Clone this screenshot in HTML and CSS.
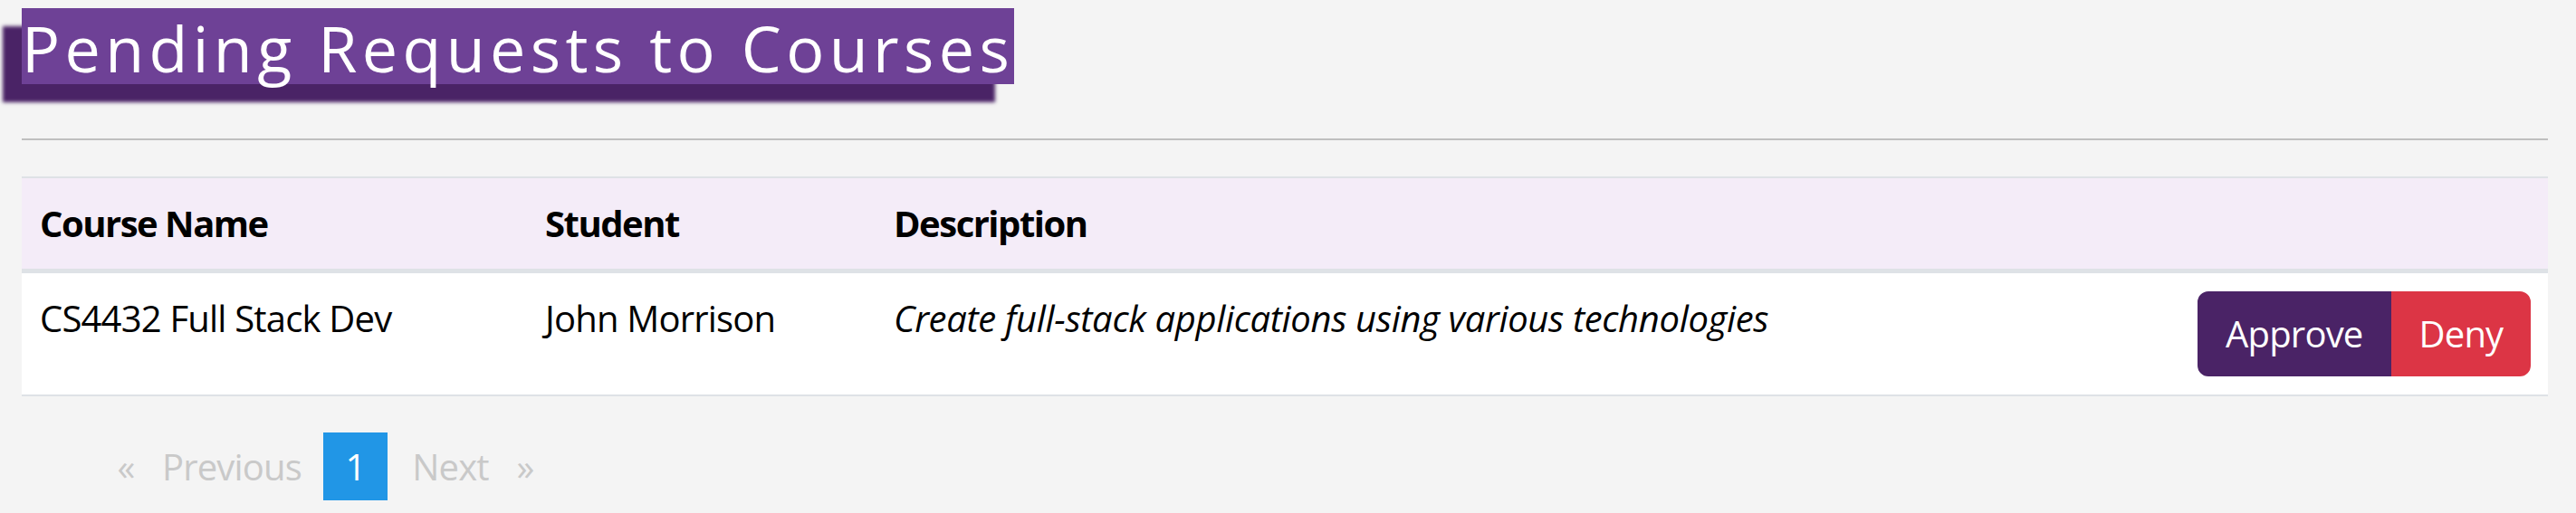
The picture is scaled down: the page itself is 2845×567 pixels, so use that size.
FILE: index.html
```html
<!DOCTYPE html>
<html lang="en">
<head>
<meta charset="utf-8">
<title>Pending Requests to Courses</title>
<link rel="stylesheet" href="styles.css">
</head>
<body>
<div class="page">
  <h1 class="title">Pending Requests to Courses</h1>
  <hr class="divider">
  <table class="requests">
    <colgroup>
      <col class="col-course">
      <col class="col-student">
      <col class="col-desc">
      <col class="col-actions">
    </colgroup>
    <thead>
      <tr>
        <th>Course Name</th>
        <th>Student</th>
        <th>Description</th>
        <th></th>
      </tr>
    </thead>
    <tbody>
      <tr>
        <td>CS4432 Full Stack Dev</td>
        <td>John Morrison</td>
        <td class="desc">Create full-stack applications using various technologies</td>
        <td class="actions">
          <div class="btn-group">
            <button class="btn btn-approve" type="button">Approve</button>
            <button class="btn btn-deny" type="button">Deny</button>
          </div>
        </td>
      </tr>
    </tbody>
  </table>
  <nav class="pager">
    <span class="pager-item pager-first">&laquo;</span>
    <span class="pager-item pager-prev">Previous</span>
    <span class="pager-item pager-active">1</span>
    <span class="pager-item pager-next">Next</span>
    <span class="pager-item pager-last">&raquo;</span>
  </nav>
</div>
</body>
</html>
```
FILE: styles.css
```css
html, body {
  margin: 0;
  padding: 0;
  background: #f4f4f4;
}

body {
  font-family: "Open Sans", "Noto Sans", sans-serif;
  font-size: 40px;
  color: #000;
  letter-spacing: -0.8px;
}

.page {
  padding: 9px 31px 0 24px;
}

.title {
  width: fit-content;
  margin: 0;
  padding: 4px 0 0 0;
  font-size: 70px;
  font-weight: 400;
  line-height: 80px;
  letter-spacing: 5.4px;
  color: #fff;
  background: #6e4196;
  box-shadow: -21px 20px 4px #4a2366;
}

.divider {
  margin: 60px 0 0 0;
  border: 0;
  height: 2px;
  background: #bfbfbf;
}

.requests {
  width: 100%;
  margin-top: 40px;
  table-layout: fixed;
  border-collapse: collapse;
  background: #fff;
}

.col-course { width: 558px; }
.col-student { width: 385px; }
.col-actions { width: 407px; }

.requests th,
.requests td {
  padding: 20px;
  line-height: 60px;
  text-align: left;
  vertical-align: top;
}

.requests thead th {
  background: #f4ecf8;
  font-weight: 700;
  letter-spacing: -1.5px;
  border-top: 2px solid #dee2e6;
  border-bottom: 5px solid #dee2e6;
}

.requests tbody td {
  border-bottom: 2px solid #dee2e6;
}

.requests .desc {
  font-style: italic;
  letter-spacing: -0.35px;
}

.requests .actions {
  text-align: right;
}

.btn-group {
  display: inline-flex;
}

.btn {
  font-family: inherit;
  font-size: 40px;
  line-height: 60px;
  letter-spacing: -0.8px;
  color: #fff;
  border: 2px solid transparent;
  padding: 15px 29px;
  margin: 0;
  cursor: pointer;
}

.btn-approve {
  background: #4a2366;
  border-color: #4a2366;
  border-radius: 12px 0 0 12px;
}

.btn-deny {
  background: #dc3545;
  border-color: #dc3545;
  border-radius: 0 12px 12px 0;
}

.pager {
  display: flex;
  align-items: center;
  margin-top: 40px;
  padding-left: 89px;
  color: #c9c9c9;
}

.pager-item {
  height: 75px;
  line-height: 75px;
  text-align: center;
}

.pager-first { width: 52px; }
.pager-prev { width: 182px; }
.pager-active {
  width: 71px;
  margin: 0 10px;
  background: #2196e6;
  color: #fff;
}
.pager-next { width: 119px; }
.pager-last { width: 46px; }
```
